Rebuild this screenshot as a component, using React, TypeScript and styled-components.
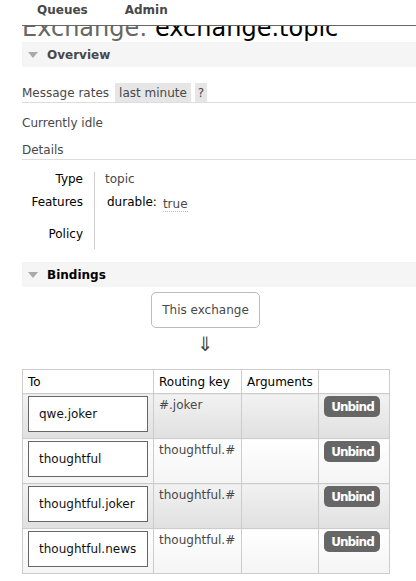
import styled, { createGlobalStyle } from "styled-components";

const GlobalStyle = createGlobalStyle`
  html, body {
    margin: 0;
    padding: 0;
    background: #fff;
  }
  body {
    font-family: "DejaVu Sans", Verdana, sans-serif;
    font-size: 12px;
    color: #484848;
  }
`;

const Page = styled.div`
  padding-left: 22px;
  width: 394px;
  overflow: hidden;
`;

const Header = styled.div`
  height: 26px;
  box-sizing: border-box;
  border-bottom: 1px solid #666;
  display: flex;
  gap: 37px;
  padding: 3px 0 0 15px;
`;

const NavItem = styled.span`
  font-weight: bold;
  line-height: 14px;
  color: #484848;
`;

const TitleClip = styled.div`
  height: 16px;
  overflow: hidden;
`;

const Title = styled.h1`
  margin: -10px 0 0;
  font-size: 24px;
  line-height: 24px;
  font-weight: normal;
  color: #000;
  white-space: nowrap;
`;

const TitleLabel = styled.span`
  color: #666;
`;

const SectionBar = styled.div<{ $dark?: boolean }>`
  height: 25px;
  background: #f5f5f5;
  display: flex;
  align-items: center;
  gap: 9px;
  padding-left: 6px;
  margin-top: ${(p) => (p.$dark ? "13px" : "0")};
  font-weight: bold;
  color: ${(p) => (p.$dark ? "#000" : "#484848")};
`;

const Triangle = styled.span`
  width: 0;
  height: 0;
  border-left: 5px solid transparent;
  border-right: 5px solid transparent;
  border-top: 6px solid #aaa;
`;

const RatesRow = styled.div`
  margin-top: 16px;
  height: 19px;
  border-bottom: 1px solid #ddd;
  display: flex;
  align-items: stretch;
  gap: 4px;
`;

const RatesLabel = styled.span`
  line-height: 21px;
  margin-right: 2px;
`;

const Chip = styled.span<{ $pad: number }>`
  background: #e6e6e6;
  line-height: 21px;
  padding: 0 ${(p) => p.$pad}px;
  color: #484848;
`;

const Line = styled.div`
  margin-top: 12px;
  line-height: 14px;
  padding-top: 1px;
`;

const DetailsHead = styled.div`
  margin-top: 12px;
  line-height: 14px;
  padding-top: 1px;
  padding-bottom: 2px;
  border-bottom: 1px solid #ddd;
`;

const Facts = styled.div`
  margin-top: 12px;
  display: grid;
  grid-template-columns: 72px 1fr;
  grid-template-rows: 14px 32px 31px;
`;

const FactLabel = styled.div`
  text-align: right;
  color: #000;
  line-height: 14px;
  align-self: center;
  padding-right: 11px;
`;

const FactValue = styled.div<{ $indent?: number }>`
  border-left: 1px solid #ccc;
  display: flex;
  align-items: center;
  padding-left: ${(p) => p.$indent ?? 10}px;
  gap: 6px;
`;

const Acronym = styled.span`
  color: #000;
`;

const Abbr = styled.abbr`
  text-decoration: none;
  border-bottom: 1px dotted #bbb;
  margin-top: 5px;
  line-height: 13px;
`;

const Bindings = styled.div`
  width: 367px;
  display: flex;
  flex-direction: column;
  align-items: center;
`;

const SourceBox = styled.div`
  margin-top: 5px;
  height: 36px;
  box-sizing: border-box;
  border: 1px solid #bbb;
  border-radius: 5px;
  padding: 0 10px;
  display: flex;
  align-items: center;
  color: #484848;
`;

const Arrow = styled.div`
  font-size: 20px;
  line-height: 24px;
  margin-top: 4px;
  height: 37px;
  color: #484848;
`;

const Table = styled.table`
  border-collapse: collapse;
  table-layout: fixed;
  width: 367px;
  align-self: stretch;
`;

const Th = styled.th`
  height: 23px;
  padding: 0 5px;
  border: 1px solid #ccc;
  text-align: left;
  font-weight: normal;
  color: #000;
  background: #fff;
`;

const Td = styled.td<{ $alt: boolean }>`
  height: 45px;
  padding: 2px 5px;
  box-sizing: border-box;
  border: 1px solid #ccc;
  vertical-align: top;
  background: ${(p) =>
    p.$alt
      ? "linear-gradient(to bottom, #f2f2f2 0%, #e0e0e0 100%)"
      : "linear-gradient(to bottom, #ffffff 0%, #f4f4f4 100%)"};
`;

const QueueBox = styled.div`
  width: 120px;
  height: 36px;
  box-sizing: border-box;
  border: 1px solid #666;
  background: #fff;
  padding-left: 10px;
  line-height: 35px;
  color: #111;
  white-space: nowrap;
`;

const Key = styled.div`
  line-height: 14px;
  margin-top: 2px;
  white-space: nowrap;
`;

const Unbind = styled.button`
  width: 56px;
  height: 21px;
  border: none;
  border-radius: 5px;
  background: #666;
  color: #fff;
  font-family: inherit;
  font-size: 12px;
  font-weight: bold;
  letter-spacing: -0.9px;
  padding: 0 0 0 1px;
  cursor: pointer;
`;

const bindings = [
  { queue: "qwe.joker", key: "#.joker" },
  { queue: "thoughtful", key: "thoughtful.#" },
  { queue: "thoughtful.joker", key: "thoughtful.#" },
  { queue: "thoughtful.news", key: "thoughtful.#" },
];

export default function App() {
  return (
    <>
      <GlobalStyle />
      <Page>
        <Header>
          <NavItem>Queues</NavItem>
          <NavItem>Admin</NavItem>
        </Header>
        <TitleClip>
          <Title>
            <TitleLabel>Exchange:</TitleLabel> exchange.topic
          </Title>
        </TitleClip>

        <SectionBar>
          <Triangle />
          Overview
        </SectionBar>
        <RatesRow>
          <RatesLabel>Message rates</RatesLabel>
          <Chip $pad={4}>last minute</Chip>
          <Chip $pad={3}>?</Chip>
        </RatesRow>
        <Line>Currently idle</Line>
        <DetailsHead>Details</DetailsHead>
        <Facts>
          <FactLabel>Type</FactLabel>
          <FactValue>topic</FactValue>
          <FactLabel>Features</FactLabel>
          <FactValue $indent={12}>
            <Acronym>durable:</Acronym>
            <Abbr title="durable">true</Abbr>
          </FactValue>
          <FactLabel>Policy</FactLabel>
          <FactValue />
        </Facts>

        <SectionBar $dark>
          <Triangle />
          Bindings
        </SectionBar>
        <Bindings>
          <SourceBox>This exchange</SourceBox>
          <Arrow>⇓</Arrow>
          <Table>
            <colgroup>
              <col style={{ width: 131 }} />
              <col style={{ width: 88 }} />
              <col style={{ width: 77 }} />
              <col style={{ width: 71 }} />
            </colgroup>
            <thead>
              <tr>
                <Th>To</Th>
                <Th>Routing key</Th>
                <Th>Arguments</Th>
                <Th />
              </tr>
            </thead>
            <tbody>
              {bindings.map((b, i) => (
                <tr key={b.queue}>
                  <Td $alt={i % 2 === 0}>
                    <QueueBox>{b.queue}</QueueBox>
                  </Td>
                  <Td $alt={i % 2 === 0}>
                    <Key>{b.key}</Key>
                  </Td>
                  <Td $alt={i % 2 === 0} />
                  <Td $alt={i % 2 === 0}>
                    <Unbind>Unbind</Unbind>
                  </Td>
                </tr>
              ))}
            </tbody>
          </Table>
        </Bindings>
      </Page>
    </>
  );
}
